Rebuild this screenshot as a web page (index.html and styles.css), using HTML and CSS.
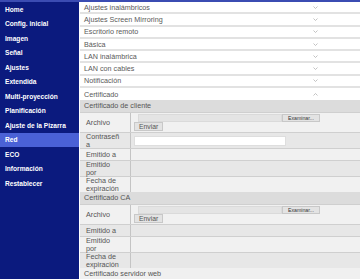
FILE: index.html
```html
<!DOCTYPE html>
<html lang="es">
  <head>
    <meta charset="UTF-8" />
    <meta name="viewport" content="width=device-width, initial-scale=1.0" />
    <title>Red</title>
    <link rel="stylesheet" href="styles.css">
  </head>
  <body>
    <div class="page">
      <nav class="sidebar">
        <a class="sidebar__item">Home</a>
        <a class="sidebar__item">Config. inicial</a>
        <a class="sidebar__item">Imagen</a>
        <a class="sidebar__item">Señal</a>
        <a class="sidebar__item">Ajustes</a>
        <a class="sidebar__item">Extendida</a>
        <a class="sidebar__item">Multi-proyección</a>
        <a class="sidebar__item">Planificación</a>
        <a class="sidebar__item">Ajuste de la Pizarra</a>
        <a class="sidebar__item active">Red</a>
        <a class="sidebar__item">ECO</a>
        <a class="sidebar__item">Información</a>
        <a class="sidebar__item">Restablecer</a>
      </nav>

      <main class="content">
        <div class="acc">
          <span>Ajustes inalámbricos</span>
          <svg class="acc__icon" width="5" height="3" viewBox="0 0 5 3"><polyline points="0.5,0.5 2.5,2.5 4.5,0.5" /></svg>
        </div>
        <div class="acc">
          <span>Ajustes Screen Mirroring</span>
          <svg class="acc__icon" width="5" height="3" viewBox="0 0 5 3"><polyline points="0.5,0.5 2.5,2.5 4.5,0.5" /></svg>
        </div>
        <div class="acc">
          <span>Escritorio remoto</span>
          <svg class="acc__icon" width="5" height="3" viewBox="0 0 5 3"><polyline points="0.5,0.5 2.5,2.5 4.5,0.5" /></svg>
        </div>
        <div class="acc">
          <span>Básica</span>
          <svg class="acc__icon" width="5" height="3" viewBox="0 0 5 3"><polyline points="0.5,0.5 2.5,2.5 4.5,0.5" /></svg>
        </div>
        <div class="acc">
          <span>LAN inalámbrica</span>
          <svg class="acc__icon" width="5" height="3" viewBox="0 0 5 3"><polyline points="0.5,0.5 2.5,2.5 4.5,0.5" /></svg>
        </div>
        <div class="acc">
          <span>LAN con cables</span>
          <svg class="acc__icon" width="5" height="3" viewBox="0 0 5 3"><polyline points="0.5,0.5 2.5,2.5 4.5,0.5" /></svg>
        </div>
        <div class="acc">
          <span>Notificación</span>
          <svg class="acc__icon" width="5" height="3" viewBox="0 0 5 3"><polyline points="0.5,0.5 2.5,2.5 4.5,0.5" /></svg>
        </div>
        <div class="acc acc--open">
          <span>Certificado</span>
          <svg class="acc__icon" width="5" height="3" viewBox="0 0 5 3"><polyline points="0.5,2.5 2.5,0.5 4.5,2.5" /></svg>
        </div>

        <div class="cert">
          <div class="cert__title">Certificado de cliente</div>
          <div class="cert__row">
            <div class="cert__label">Archivo</div>
            <div class="cert__value cert__value--file">
              <div class="file">
                <span class="file__path"></span>
                <span class="btn btn--small">Examinar...</span>
              </div>
              <span class="btn">Enviar</span>
            </div>
          </div>
          <div class="cert__row">
            <div class="cert__label">Contraseña</div>
            <div class="cert__value"><span class="input"></span></div>
          </div>
          <div class="cert__row">
            <div class="cert__label">Emitido a</div>
            <div class="cert__value"></div>
          </div>
          <div class="cert__row">
            <div class="cert__label">Emitido por</div>
            <div class="cert__value"></div>
          </div>
          <div class="cert__row">
            <div class="cert__label">Fecha de expiración</div>
            <div class="cert__value"></div>
          </div>
        </div>

        <div class="cert">
          <div class="cert__title">Certificado CA</div>
          <div class="cert__row">
            <div class="cert__label">Archivo</div>
            <div class="cert__value cert__value--file">
              <div class="file">
                <span class="file__path"></span>
                <span class="btn btn--small">Examinar...</span>
              </div>
              <span class="btn">Enviar</span>
            </div>
          </div>
          <div class="cert__row">
            <div class="cert__label">Emitido a</div>
            <div class="cert__value"></div>
          </div>
          <div class="cert__row">
            <div class="cert__label">Emitido por</div>
            <div class="cert__value"></div>
          </div>
          <div class="cert__row">
            <div class="cert__label">Fecha de expiración</div>
            <div class="cert__value"></div>
          </div>
        </div>

        <div class="cert">
          <div class="cert__title cert__title--closed">Certificado servidor web</div>
        </div>
      </main>
    </div>
  </body>
</html>
```

FILE: styles.css
```css
* {
  padding: 0;
  margin: 0;
  box-sizing: border-box;
}
body {
  background-color: white;
  font-family: "Liberation Sans", Arial, sans-serif;
  color: #555;
  overflow: hidden;
  -webkit-font-smoothing: antialiased;
}

.page {
  display: flex;
  min-height: 100vh;
  border-top: 2px solid #3b4cb2;
}

.sidebar {
  width: 79px;
  flex-shrink: 0;
  background-color: #0b1a7e;
  display: flex;
  flex-direction: column;
}

.sidebar__item {
  display: flex;
  align-items: center;
  height: 14.5px;
  padding-left: 5px;
  color: white;
  font-size: 6.6px;
  font-weight: bold;
  white-space: nowrap;
  cursor: pointer;
}

.sidebar__item.active {
  background-color: #4a61d6;
}

.content {
  flex: 1;
  margin-left: 1px;
  font-size: 7.2px;
}

.acc {
  display: flex;
  align-items: center;
  justify-content: space-between;
  height: 12.3px;
  padding: 0 42px 0 4px;
  border-bottom: 2px solid #e2e2e2;
  color: #5a5a5a;
}

.acc--open {
  border-bottom: none;
}

.acc__icon polyline {
  fill: none;
  stroke: #b4b4b4;
  stroke-width: 0.8;
}

.cert__title {
  height: 12px;
  line-height: 12px;
  padding-left: 4px;
  background-color: #dcdcdc;
}

.cert__title--closed {
  background-color: #f0f0f0;
}

.cert__row {
  display: flex;
  min-height: 12px;
  border-top: 1px solid #cfcfcf;
}

.cert__row:nth-child(even) {
  background-color: #f1f1f1;
}

.cert__row:nth-child(odd) {
  background-color: #e7e7e7;
}

.cert__label {
  width: 51px;
  flex-shrink: 0;
  padding: 0 8px 0 6px;
  border-right: 1px solid #c4c4c4;
  display: flex;
  align-items: center;
  line-height: 7.5px;
  overflow-wrap: anywhere;
}

.cert__value {
  flex: 1;
  display: flex;
  align-items: center;
  padding-left: 3px;
}

.cert__value--file {
  flex-direction: column;
  align-items: flex-start;
  padding: 1px 0 1px 3px;
}

.file {
  display: flex;
  margin-left: 4px;
}

.file__path {
  width: 144px;
  height: 8px;
  background-color: #e4e4e4;
  border: 1px solid #dadada;
}

.btn {
  display: inline-block;
  height: 9px;
  line-height: 7px;
  padding: 0 4px;
  font-size: 6.8px;
  color: #555;
  background-color: #e3e3e3;
  border: 1px solid #c8c8c8;
}

.btn--small {
  height: 8px;
  line-height: 6px;
  font-size: 5.2px;
  padding: 0 5px;
  color: #333;
}

.input {
  width: 152px;
  height: 10px;
  background-color: white;
  border: 1px solid #dedede;
}
```
